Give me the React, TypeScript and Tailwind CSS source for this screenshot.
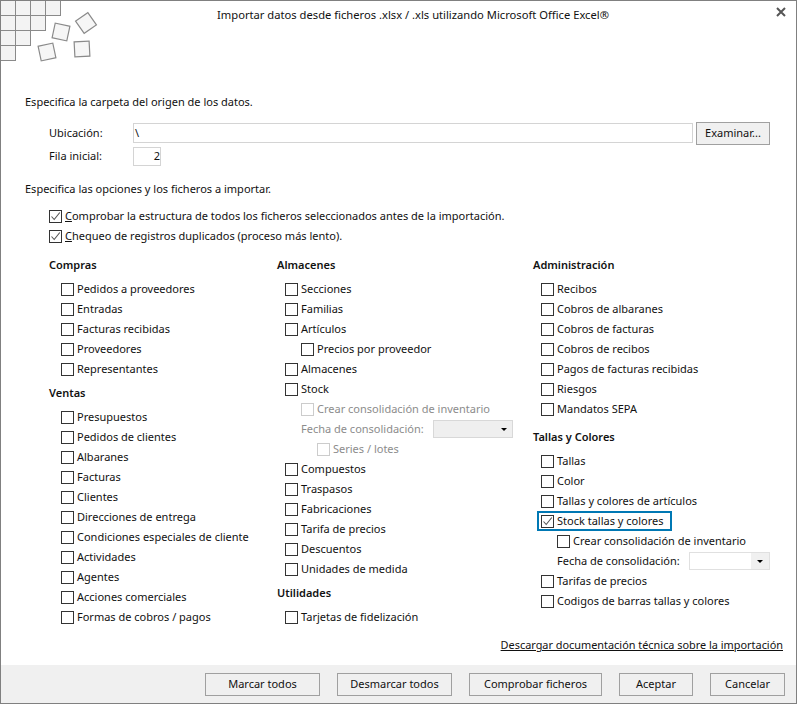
import { ReactNode } from 'react';

type Item = { label: string; indent?: boolean; disabled?: boolean };

const compras = ['Pedidos a proveedores', 'Entradas', 'Facturas recibidas', 'Proveedores', 'Representantes'];
const ventas = ['Presupuestos', 'Pedidos de clientes', 'Albaranes', 'Facturas', 'Clientes', 'Direcciones de entrega', 'Condiciones especiales de cliente', 'Actividades', 'Agentes', 'Acciones comerciales', 'Formas de cobros / pagos'];
const admin = ['Recibos', 'Cobros de albaranes', 'Cobros de facturas', 'Cobros de recibos', 'Pagos de facturas recibidas', 'Riesgos', 'Mandatos SEPA'];

function Box({ checked, disabled }: { checked?: boolean; disabled?: boolean }) {
  return (
    <span className={`flex h-[13px] w-[13px] shrink-0 items-center justify-center border bg-white ${disabled ? 'border-[#cccccc]' : 'border-[#333333]'}`}>
      {checked && (
        <svg width="11" height="11" viewBox="0 0 11 11" fill="none">
          <path d="M1.5 5.5 L4.2 8.5 L9.8 1.5" stroke="#555555" strokeWidth="1.1" />
        </svg>
      )}
    </span>
  );
}

function Check({ label, checked, disabled, className = '' }: { label: ReactNode; checked?: boolean; disabled?: boolean; className?: string }) {
  return (
    <div className={`flex h-5 items-center gap-[3px] ${disabled ? 'text-[#8c8c8c]' : ''} ${className}`}>
      <Box checked={checked} disabled={disabled} />
      <span className="whitespace-nowrap">{label}</span>
    </div>
  );
}

function Heading({ children, className = '' }: { children: ReactNode; className?: string }) {
  return <div className={`mb-1 flex h-5 items-center font-semibold ${className}`}>{children}</div>;
}

function Arrow() {
  return <span className="h-0 w-0 border-x-[3px] border-t-[3px] border-x-transparent border-t-black" />;
}

function Btn({ children, className = '' }: { children: ReactNode; className?: string }) {
  return (
    <div className={`flex h-[23px] items-center justify-center border border-[#a0a0a0] bg-[#f0f0f0] ${className}`}>
      {children}
    </div>
  );
}

function Logo() {
  const cells: [number, number][] = [];
  [4, 3, 2, 1].forEach((n, row) => {
    for (let c = 0; c < n; c++) cells.push([c, row]);
  });
  const squares = [
    [60, 31, 12],
    [85, 22, -35],
    [46, 51, -12],
    [81, 48, -3],
  ];
  return (
    <svg width="110" height="62" viewBox="0 0 110 62" className="shrink-0">
      {cells.map(([c, r]) => (
        <rect key={`${c}-${r}`} x={c * 15 - 0.5} y={r * 15 - 0.5} width="15" height="15" fill="#f3f3f3" stroke="#8a8a8a" />
      ))}
      {squares.map(([x, y, a]) => (
        <rect key={x} x={x - 7.5} y={y - 7.5} width="15" height="15" fill="#f6f6f6" stroke="#8a8a8a" strokeWidth="1.2" transform={`rotate(${a} ${x} ${y})`} />
      ))}
    </svg>
  );
}

export default function App() {
  const almacenesTop: Item[] = [
    { label: 'Secciones' },
    { label: 'Familias' },
    { label: 'Artículos' },
    { label: 'Precios por proveedor', indent: true },
    { label: 'Almacenes' },
    { label: 'Stock' },
  ];
  const almacenesBottom = ['Compuestos', 'Traspasos', 'Fabricaciones', 'Tarifa de precios', 'Descuentos', 'Unidades de medida'];

  return (
    <div className="flex h-[704px] w-[797px] flex-col overflow-hidden border border-[#808080] bg-white text-[11px] text-[#111111] [font-family:'Noto_Sans',sans-serif]">
      <div className="flex h-[91px] shrink-0 items-start">
        <Logo />
        <div className="mt-[6px] ml-[106px] whitespace-nowrap text-[11.2px]">Importar datos desde ficheros .xlsx / .xls utilizando Microsoft Office Excel®</div>
        <svg width="10" height="10" viewBox="0 0 10 10" className="mt-[6px] ml-auto mr-[10px]">
          <path d="M1 1 L9 9 M9 1 L1 9" stroke="#555555" strokeWidth="2" />
        </svg>
      </div>

      <div className="flex-1 pl-6">
        <div className="flex h-5 items-center">Especifica la carpeta del origen de los datos.</div>
        <div className="mt-[9px] flex h-[24px] items-center pl-6">
          <span className="w-[84px]">Ubicación:</span>
          <div className="flex h-5 w-[560px] items-center border border-[#d4d4d4] pl-px">\</div>
          <Btn className="ml-[3px] w-[74px]">Examinar...</Btn>
        </div>
        <div className="flex h-[22px] items-center pl-6">
          <span className="w-[84px]">Fila inicial:</span>
          <div className="flex h-[19px] w-[28px] items-center justify-end border border-[#d4d4d4]">2</div>
        </div>
        <div className="mt-[12px] flex h-5 items-center">Especifica las opciones y los ficheros a importar.</div>
        <div className="mt-[7px] pl-6">
          <Check checked label={<><u>C</u>omprobar la estructura de todos los ficheros seleccionados antes de la importación.</>} />
          <Check checked label={<><u>C</u>hequeo de registros duplicados (proceso más lento).</>} />
        </div>

        <div className="mt-[9px] flex pl-6">
          <div className="w-[228px]">
            <Heading>Compras</Heading>
            <div className="pl-3">{compras.map(c => <Check key={c} label={c} />)}</div>
            <Heading className="mt-1">Ventas</Heading>
            <div className="pl-3">{ventas.map(c => <Check key={c} label={c} />)}</div>
          </div>

          <div className="w-[256px]">
            <Heading>Almacenes</Heading>
            <div className="pl-2">
              {almacenesTop.map(i => <Check key={i.label} label={i.label} className={i.indent ? 'pl-4' : ''} />)}
              <Check disabled label="Crear consolidación de inventario" className="pl-4" />
              <div className="flex h-5 items-center pl-4 text-[#8c8c8c]">
                <span className="w-[132px] whitespace-nowrap">Fecha de consolidación:</span>
                <div className="flex h-[18px] w-[80px] items-center justify-end border border-[#d8d8d8] bg-[#efefef] pr-[5px]"><Arrow /></div>
              </div>
              <Check disabled label="Series / lotes" className="pl-8" />
              {almacenesBottom.map(c => <Check key={c} label={c} />)}
            </div>
            <Heading className="mt-1">Utilidades</Heading>
            <div className="pl-2"><Check label="Tarjetas de fidelización" /></div>
          </div>

          <div className="flex-1">
            <Heading>Administración</Heading>
            <div className="pl-2">{admin.map(c => <Check key={c} label={c} />)}</div>
            <Heading className="mt-2">Tallas y Colores</Heading>
            <div className="pl-2">
              <Check label="Tallas" />
              <Check label="Color" />
              <Check label="Tallas y colores de artículos" />
              <Check checked label="Stock tallas y colores" className="-ml-1 w-[135px] pl-1 outline-2 -outline-offset-2 outline-[#0078b4]" />
              <Check label="Crear consolidación de inventario" className="pl-4" />
              <div className="flex h-5 items-center pl-4">
                <span className="w-[132px] whitespace-nowrap">Fecha de consolidación:</span>
                <div className="flex h-[18px] w-[81px] border border-[#e0e0e0] bg-white">
                  <span className="flex-1" />
                  <span className="flex w-[18px] items-center justify-center bg-[#f0f0f0]"><Arrow /></span>
                </div>
              </div>
              <Check label="Tarifas de precios" />
              <Check label="Codigos de barras tallas y colores" />
            </div>
          </div>
        </div>

        <div className="mt-2 flex h-5 items-center justify-end pr-[13px] text-[10.9px]">
          <u>Descargar documentación técnica sobre la importación</u>
        </div>
      </div>

      <div className="flex h-[38px] shrink-0 items-start gap-[17px] bg-[#f0f0f0] pt-2 pl-[204px]">
        <Btn className="w-[115px]">Marcar todos</Btn>
        <Btn className="w-[115px]">Desmarcar todos</Btn>
        <Btn className="w-[133px]">Comprobar ficheros</Btn>
        <Btn className="w-[74px]">Aceptar</Btn>
        <Btn className="w-[75px]">Cancelar</Btn>
      </div>
    </div>
  );
}
